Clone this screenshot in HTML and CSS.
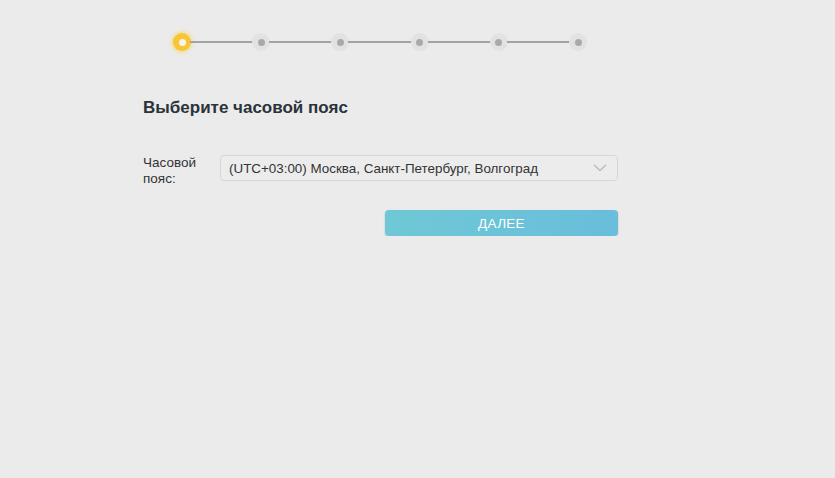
FILE: index.html
```html
<!doctype html>
<html>
    <head>
        <meta charset="utf-8">
        <title>Выберите часовой пояс</title>
        <link rel="stylesheet" href="styles.css">
    </head>
    <body>
        <div class="wizard">
            <!-- progress of the setup steps -->
            <div class="steps">
                <span class="step active"></span>
                <span class="bar"></span>
                <span class="step"></span>
                <span class="bar"></span>
                <span class="step"></span>
                <span class="bar"></span>
                <span class="step"></span>
                <span class="bar"></span>
                <span class="step"></span>
                <span class="bar"></span>
                <span class="step"></span>
            </div>

            <h1 class="title">Выберите часовой пояс</h1>

            <div class="field">
                <label class="field-label">Часовой<br>пояс:</label>
                <div class="select">
                    <span class="select-text">(UTC+03:00) Москва, Санкт-Петербург, Волгоград</span>
                    <svg class="chevron" width="14" height="8" viewBox="0 0 14 8">
                        <path d="M1 1 L7 6.5 L13 1" fill="none" stroke="#bdbdbd" stroke-width="1.6"/>
                    </svg>
                </div>
            </div>

            <div class="actions">
                <button class="next">ДАЛЕЕ</button>
            </div>
        </div>
    </body>
</html>
```

FILE: styles.css
```css
body {
    margin: 0;
    background: #ebebeb;
    font-family: "Liberation Sans", Arial, sans-serif;
    color: #333;
}
.wizard {
    width: 475px;
    margin-left: 143px;
    padding-top: 33px;
}
.steps {
    display: flex;
    align-items: center;
    margin: 0 31px 0 30px;
}
.step {
    width: 18px;
    height: 18px;
    border-radius: 50%;
    background: #e2e2e2;
    display: flex;
    align-items: center;
    justify-content: center;
    flex: none;
}
.step::after {
    content: "";
    width: 7px;
    height: 7px;
    border-radius: 50%;
    background: #a9a9a9;
}
.step.active {
    background: #f7c632;
    box-shadow: 0 0 3px 2px rgba(250, 215, 110, 0.55);
}
.step.active::after {
    background: #f4f4f4;
}
.bar {
    flex: 1;
    height: 2px;
    background: #a3a3a3;
    margin: 0 -1px;
}
.title {
    margin: 47px 0 0;
    font-size: 17px;
    font-weight: bold;
    color: #2a323a;
    line-height: 20px;
}
.field {
    display: flex;
    align-items: flex-start;
    margin-top: 37px;
}
.field-label {
    width: 77px;
    font-size: 13.5px;
    line-height: 16px;
    color: #333;
}
.select {
    flex: 1;
    height: 24px;
    border: 1px solid #d6d6d6;
    border-radius: 4px;
    background: #ececec;
    display: flex;
    align-items: center;
    padding: 0 10px 0 8px;
}
.select-text {
    flex: 1;
    font-size: 13.4px;
    color: #333;
}
.chevron {
    display: block;
}
.actions {
    display: flex;
    justify-content: flex-end;
    margin-top: 23px;
}
.next {
    width: 233px;
    height: 26px;
    border: none;
    border-radius: 4px;
    background: linear-gradient(to right, #6fc8d5, #68bedb);
    box-shadow: 0 1px 2px rgba(0, 0, 0, 0.2);
    color: #fff;
    font-family: "Liberation Sans", Arial, sans-serif;
    font-size: 13.5px;
    letter-spacing: 0.3px;
}
```
